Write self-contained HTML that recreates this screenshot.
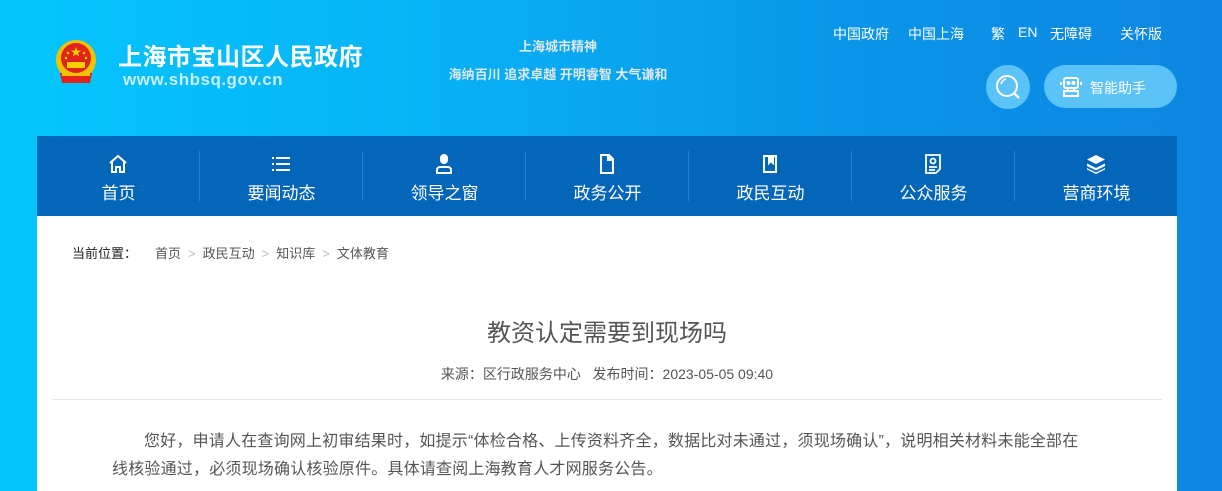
<!DOCTYPE html>
<html><head><meta charset="utf-8">
<style>
*{margin:0;padding:0;box-sizing:border-box}
body{width:1222px;height:491px;overflow:hidden;font-family:"Liberation Sans","Noto Sans CJK SC",sans-serif;background:linear-gradient(90deg,#04c6fd 0%,#08b2f6 35%,#0a95e8 70%,#0c86e2 100%);position:relative}
.abs{position:absolute}
.title{left:118px;top:37px;font-size:24px;font-weight:bold;color:#fff;letter-spacing:0.5px}
.url{left:123px;top:70px;font-size:17px;font-weight:bold;color:#c8eefc;letter-spacing:0.5px}
.slogan{left:420px;width:276px;text-align:center;font-size:13px;font-weight:bold;color:#dfe8ee}
.top a{position:absolute;top:24px;font-size:14px;color:#fff;text-decoration:none}
.search{left:986px;top:65px;width:44px;height:44px;border-radius:50%;background:#5cc3f9}
.pill{left:1044px;top:65px;width:133px;height:43px;border-radius:22px;background:#5cc3f9;color:#fff;font-size:14px}
.nav{left:37px;top:136px;width:1140px;height:80px;background:#0466b9}
.nav .it{position:absolute;top:0;width:163px;height:80px;text-align:center;color:#fff}
.nav .it span{position:absolute;left:0;right:0;top:43px;font-size:17px}
.nav .it svg{position:absolute;left:71px;top:18px}
.sep{position:absolute;top:15px;width:1px;height:50px;background:#2e80c6}
.main{left:37px;top:216px;width:1140px;height:275px;background:#fff}
.bc{left:72px;top:243px;font-size:13px;color:#222}
.bc b{font-weight:normal;color:#555}
.bc i{font-style:normal;color:#bbb;margin:0 7px}
h1{position:absolute;left:37px;width:1140px;top:313px;text-align:center;font-size:24px;font-weight:normal;color:#555}
.meta{left:37px;width:1140px;top:364px;text-align:center;font-size:14px;color:#555}
.hr{left:52px;top:399px;width:1110px;height:1px;background:#e6e6e6}
.body{left:112px;top:428px;width:972px;font-size:16px;letter-spacing:0.2px;line-height:28px;color:#555;text-indent:2em}
</style></head><body>
<svg class="abs" style="left:54px;top:39px" width="44" height="48" viewBox="0 0 44 48">
<ellipse cx="22" cy="21" rx="20" ry="20" fill="#f2c200"/>
<ellipse cx="22" cy="19" rx="15" ry="15" fill="#e2231a"/>
<path d="M22 8l1.3 3.6h3.8l-3 2.3 1.1 3.6-3.2-2.2-3.2 2.2 1.1-3.6-3-2.3h3.8z" fill="#f7d000"/>
<circle cx="14" cy="14" r="1.3" fill="#f7d000"/><circle cx="30" cy="14" r="1.3" fill="#f7d000"/><circle cx="12" cy="19" r="1.3" fill="#f7d000"/><circle cx="32" cy="19" r="1.3" fill="#f7d000"/>
<rect x="13" y="23" width="18" height="6" fill="#f7d000"/>
<path d="M6 34h32l-2 10H8z" fill="#e2231a"/><path d="M8 34h28v3H8z" fill="#f2c200"/>
</svg>
<div class="abs title">上海市宝山区人民政府</div>
<div class="abs url">www.shbsq.gov.cn</div>
<div class="abs slogan" style="top:36px">上海城市精神</div>
<div class="abs slogan" style="top:64px">海纳百川 追求卓越 开明睿智 大气谦和</div>
<div class="top">
<a style="left:833px">中国政府</a><a style="left:908px">中国上海</a><a style="left:991px">繁</a><a style="left:1018px">EN</a><a style="left:1050px">无障碍</a><a style="left:1120px">关怀版</a>
</div>
<div class="abs search"><svg width="44" height="44" viewBox="0 0 44 44"><circle cx="21" cy="21" r="10" fill="none" stroke="#fff" stroke-width="2"/><path d="M28 28l5 5" stroke="#fff" stroke-width="2.5"/><path d="M15 19a7 7 0 0 1 5-5" stroke="#fff" stroke-width="1.5" fill="none"/></svg></div>
<div class="abs pill"><svg class="abs" style="left:16px;top:11px" width="22" height="22" viewBox="0 0 22 22" fill="none" stroke="#fff" stroke-width="2"><rect x="4" y="2" width="14" height="10" rx="2"/><circle cx="8.5" cy="7" r="1" fill="#fff"/><circle cx="13.5" cy="7" r="1" fill="#fff"/><path d="M1 6v3M21 6v3M8 12v3M14 12v3M4 15h14v5H4z"/></svg><span class="abs" style="left:46px;top:13px">智能助手</span></div>
<div class="abs nav">
<div class="it" style="left:0"><svg width="20" height="20" viewBox="0 0 20 20" fill="none" stroke="#fff" stroke-width="2"><path d="M2 9L10 2l8 7M4 8v10h4v-5h4v5h4V8"/></svg><span>首页</span></div>
<div class="sep" style="left:162px"></div>
<div class="it" style="left:163px"><svg width="20" height="20" viewBox="0 0 20 20" fill="#fff"><rect x="1" y="3" width="2" height="2"/><rect x="5" y="3" width="14" height="2"/><rect x="1" y="9" width="2" height="2"/><rect x="5" y="9" width="14" height="2"/><rect x="1" y="15" width="2" height="2"/><rect x="5" y="15" width="14" height="2"/></svg><span>要闻动态</span></div>
<div class="sep" style="left:325px"></div>
<div class="it" style="left:326px"><svg width="20" height="20" viewBox="0 0 20 20" fill="none" stroke="#fff" stroke-width="2"><rect x="7" y="1" width="6" height="8" rx="3" fill="#fff"/><path d="M3 19v-3a3 3 0 0 1 3-3h8a3 3 0 0 1 3 3v3z"/></svg><span>领导之窗</span></div>
<div class="sep" style="left:488px"></div>
<div class="it" style="left:489px"><svg width="20" height="20" viewBox="0 0 20 20" fill="none" stroke="#fff" stroke-width="2"><path d="M4 1h8l4 4v14H4z"/><path d="M11 1v5h5" fill="#fff"/></svg><span>政务公开</span></div>
<div class="sep" style="left:651px"></div>
<div class="it" style="left:652px"><svg width="20" height="20" viewBox="0 0 20 20" fill="none" stroke="#fff" stroke-width="2"><path d="M4 2h12v16H4z"/><path d="M9 2v7l2-2 2 2V2" fill="#fff"/></svg><span>政民互动</span></div>
<div class="sep" style="left:814px"></div>
<div class="it" style="left:815px"><svg width="20" height="20" viewBox="0 0 20 20" fill="none" stroke="#fff" stroke-width="1.8"><path d="M3 1h14v14l-4 4H3z"/><circle cx="10" cy="7" r="2.5"/><path d="M6 13h8M6 16h6"/></svg><span>公众服务</span></div>
<div class="sep" style="left:977px"></div>
<div class="it" style="left:978px"><svg width="20" height="20" viewBox="0 0 20 20" fill="#fff"><path d="M10 1l9 4.5-9 4.5-9-4.5z"/><path d="M1 9.5l9 4.5 9-4.5v2.5l-9 4.5-9-4.5z"/><path d="M1 14l9 4.5 9-4.5v1.5l-9 4.5-9-4.5z"/></svg><span>营商环境</span></div>
</div>
<div class="abs main"></div>
<div class="abs bc">当前位置：<span style="margin-left:18px"></span><b>首页</b><i>&gt;</i><b>政民互动</b><i>&gt;</i><b>知识库</b><i>&gt;</i><b>文体教育</b></div>
<h1>教资认定需要到现场吗</h1>
<div class="abs meta">来源：区行政服务中心&nbsp;&nbsp;&nbsp;发布时间：2023-05-05 09:40</div>
<div class="abs hr"></div>
<div class="abs body">您好，申请人在查询网上初审结果时，如提示“体检合格、上传资料齐全，数据比对未通过，须现场确认”，说明相关材料未能全部在线核验通过，必须现场确认核验原件。具体请查阅上海教育人才网服务公告。</div>
</body></html>
